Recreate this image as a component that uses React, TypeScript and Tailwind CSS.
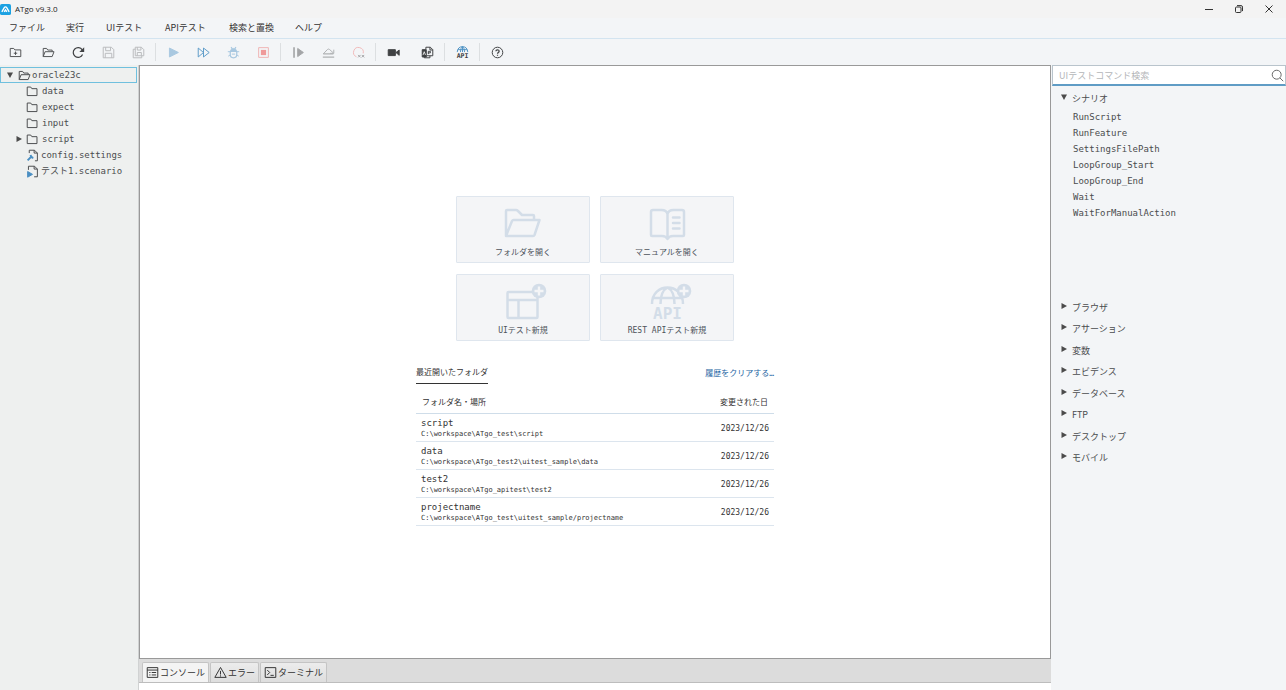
import { useState, type ReactNode } from "react";

const folderPath = "M1.5 13V2.5h4.3l1.4 2h6.3V13z";
const openFolderPath = "M1.5 13V3h4.2l1.4 2h5.4v2M1.5 13l2.3-6h11l-2.3 6z";

function Icon({ children, className = "" }: { children: ReactNode; className?: string }) {
    return (
        <svg
            viewBox="0 0 16 16"
            className={`size-[13px] shrink-0 overflow-visible ${className}`}
            fill="none"
            stroke="currentColor"
            strokeWidth="1.2"
            strokeLinejoin="round"
        >
            {children}
        </svg>
    );
}

function Triangle({ open = false, className = "" }: { open?: boolean; className?: string }) {
    return (
        <svg viewBox="0 0 6 6" className={`size-1.5 shrink-0 ${className}`} fill="#4b4b4b">
            <path d={open ? "M0 .5h6L3 6z" : "M.5 0v6L6 3z"} />
        </svg>
    );
}

type Tool = { label: string; color: string; icon: ReactNode };

const toolGroups: Tool[][] = [
    [
        {
            label: "新規フォルダ",
            color: "text-[#505254]",
            icon: <><path d="M1.5 13V3h4.3l1.4 1.8h7.3V13z" /><path d="M8 6.8v4.2M5.9 8.9h4.2" /></>,
        },
        { label: "フォルダを開く", color: "text-[#505254]", icon: <path d={openFolderPath} /> },
        {
            label: "更新",
            color: "text-[#404244]",
            icon: <><path d="M13 10.5A6 6 0 1 1 12.6 4.8" strokeWidth="1.5" /><path d="M15 1.5v6H9z" fill="currentColor" stroke="none" /></>,
        },
        {
            label: "保存",
            color: "text-[#b9bbbd]",
            icon: <path d="M1.5 1.5h10l3 3v10h-13zM4.5 1.5v4.3h6V1.5M4 14.5V9h8v5.5" />,
        },
        {
            label: "すべて保存",
            color: "text-[#b9bbbd]",
            icon: <path d="M4 1.5h7.5l3 3V12H4zM6.5 1.5V5h4.5V1.5M6.5 12V8h5v4M4 4H1.5v10.5H12V12" />,
        },
    ],
    [
        {
            label: "実行",
            color: "text-[#a9c8e0]",
            icon: <path d="M3 2.5v11L14 8z" fill="currentColor" />,
        },
        {
            label: "すべて実行",
            color: "text-[#5d9bc9]",
            icon: <path d="M1.5 2.5v11L8 8zM8 2.5v11L15 8z" />,
        },
        {
            label: "デバッグ",
            color: "text-[#a9c8e0]",
            icon: (
                <>
                    <path d="M4 6.5h8v4a4 4 0 0 1-8 0zM5 1.5l1.5 2M11 1.5l-1.5 2" strokeWidth="1.5" />
                    <path d="M4.500 6C5 2 11 2 11.500 6z" fill="currentColor" />
                    <path d="M1 7h3M12 7h3M1.500 12.500 4 11M14.500 12.500 12 11M6 10h4" />
                </>
            ),
        },
        {
            label: "停止",
            color: "text-[#efb4b4]",
            icon: <><path d="M2 2h12v12H2z" /><path d="M4.8 4.8h6.4v6.4H4.8z" fill="#ef9a9a" stroke="none" /></>,
        },
    ],
    [
        {
            label: "再開",
            color: "text-[#a3a5a7]",
            icon: <><path d="M2.500 1.500v13" strokeWidth="2" /><path d="M7 3v10l7-5z" fill="currentColor" /></>,
        },
        {
            label: "ステップオーバー",
            color: "text-[#b0b2b4]",
            icon: <><path d="M1 13.800h14M1.500 9.800h12.500" strokeWidth="1.500" /><path d="m1.500 9.800 5-5.300c1-1 2-1 3 0l4.500 4M14.500 4.500v4.500H10" /></>,
        },
        {
            label: "ブレークポイントを削除",
            color: "text-[#f1b9b9]",
            icon: <><path d="M5.5 13.3A6 6 0 1 1 13.8 9" /><path d="m7.5 11 3 3m0-3-3 3M12 11l3 3m0-3-3 3" stroke="#a3a5a7" /></>,
        },
    ],
    [
        {
            label: "録画",
            color: "text-[#3f4143]",
            icon: <path d="M1.5 4.5h8.8v7.3H1.500zM11 8l4-3v6.500z" fill="currentColor" />,
        },
        {
            label: "レポート",
            color: "text-[#3f4143]",
            icon: (
                <>
                    <path d="M1.5 4.5h5v9h-5z" fill="currentColor" />
                    <path d="M6 4V1.5h5.5l3 3V12H7M11 1.5v3.4h3.5M9 10V6.500h2.500v2H9M4 13.500v1h7V12" />
                    <path d="m2.5 11 1.5-4 1.5 4" stroke="#fff" strokeWidth="1" />
                </>
            ),
        },
    ],
    [
        {
            label: "API",
            color: "text-[#4f93c4]",
            icon: (
                <>
                    <path d="M1.500 7.500C1.500-1.500 14.500-1.500 14.500 7.500M2.500 4.500h11M5.500 7.500C5.500 4 6.500 1.500 8 .8c1.500.7 2.500 3.200 2.500 6.700M8 1v6.500" />
                    <text x="8" y="15" textAnchor="middle" fontSize="8" fontWeight="700" fill="#3f4143" stroke="none" fontFamily="DejaVu Sans Mono, monospace">API</text>
                </>
            ),
        },
    ],
    [
        {
            label: "ヘルプ",
            color: "text-[#404244]",
            icon: <><circle cx="8" cy="8" r="6.5" /><path d="M6 6.600c0-2.600 4-2.600 4-.1C10 8 8 8 8 9.500M8 10.700v1.400" strokeWidth="1.5" /></>,
        },
    ],
];

const menus = [
    { name: "ファイル", width: "w-[57px]" },
    { name: "実行", width: "w-10" },
    { name: "UIテスト", width: "w-[59px]" },
    { name: "APIテスト", width: "w-16" },
    { name: "検索と置換", width: "w-[66px]" },
    { name: "ヘルプ", width: "w-12" },
];

const folders = ["data", "expect", "input", "script"];

const commands = [
    "RunScript",
    "RunFeature",
    "SettingsFilePath",
    "LoopGroup_Start",
    "LoopGroup_End",
    "Wait",
    "WaitForManualAction",
];

const categories = ["ブラウザ", "アサーション", "変数", "エビデンス", "データベース", "FTP", "デスクトップ", "モバイル"];

const recent = [
    { name: "script", path: "C:\\workspace\\ATgo_test\\script", date: "2023/12/26" },
    { name: "data", path: "C:\\workspace\\ATgo_test2\\uitest_sample\\data", date: "2023/12/26" },
    { name: "test2", path: "C:\\workspace\\ATgo_apitest\\test2", date: "2023/12/26" },
    { name: "projectname", path: "C:\\workspace\\ATgo_test\\uitest_sample/projectname", date: "2023/12/26" },
];

const plusBadge = (cx: number) => (
    <>
        <circle cx={cx} cy="10" r="7.3" fill="currentColor" stroke="none" />
        <path d={`M${cx} 5.5v9M${cx - 4.5} 10h9`} stroke="#f4f5f7" strokeWidth="2.4" />
    </>
);

const cards = [
    {
        label: "フォルダを開く",
        icon: <path d="M5 33V8q0-1 1-1h9q1 0 2 1l4 4h11q1 0 1 1v4M5 33l6-15q.5-1 1.5-1h26L33.5 32q-.4 1-1.5 1z" />,
    },
    {
        label: "マニュアルを開く",
        icon: (
            <>
                <path d="M22.5 36V11q-1-4-6-4H8q-2 0-2 2v23q0 1 1 1h10q4 0 5.5 3 1.5-3 5.5-3h10q1 0 1-1V9q0-2-2-2h-8.5q-5 0-6 4" />
                <path d="M28 14.5h6.5M28 20h6.5M28 25.5h6.5" strokeLinecap="round" />
            </>
        ),
    },
    {
        label: "UIテスト新規",
        icon: (
            <>
                <rect x="6.5" y="11" width="30" height="26" rx="1" />
                <path d="M6.5 19h30M17.5 19v18" />
                {plusBadge(38)}
            </>
        ),
    },
    {
        label: "REST APIテスト新規",
        icon: (
            <>
                <path d="M7 23c0-22 31-22 31 0M8 17h29M15.5 23c0-8 2-14 7-16.5 5 2.5 7 8.5 7 16.5" />
                {plusBadge(39)}
                <text x="22.5" y="38" textAnchor="middle" fontSize="16" fontWeight="700" fill="currentColor" stroke="none" fontFamily="DejaVu Sans Mono, monospace">API</text>
            </>
        ),
    },
];

const bottomTabs = [
    { name: "コンソール", icon: <path d="M1.5 2h13v12h-13zM1.5 5h13M4 8h1.5M7 8h5.5M4 11h1.5M7 11h5.5" /> },
    { name: "エラー", icon: <path d="M8 1.8 15 14H1zM8 6v4.5M8 11.5V13" /> },
    { name: "ターミナル", icon: <path d="M1.5 2h13v12h-13zM4 5l3 3-3 3M8 11.5h4" /> },
];

function TitleBar() {
    return (
        <header className="flex h-[18px] shrink-0 items-center bg-[#f3f3f3]">
            <svg viewBox="0 0 12 12" className="size-[11px]">
                <rect width="12" height="12" rx="2" fill="#1ba1e2" />
                <path d="M2 8.5 4.5 4.2q1.5-2 3 0L10 8.5M4.5 8.5 6 6.500l1.500 2" fill="none" stroke="#fff" strokeWidth="1.5" />
            </svg>
            <h1 className="ml-1 grow font-['Open_Sans',sans-serif] text-[8px] text-[#222]">ATgo v9.3.0</h1>
            <div className="flex text-[#333]">
                <button aria-label="最小化" className="flex w-[30px] justify-center">
                    <svg viewBox="0 0 8 8" className="size-2" fill="none" stroke="currentColor"><path d="M0 4.5h8" /></svg>
                </button>
                <button aria-label="元に戻す" className="flex w-[30px] justify-center">
                    <svg viewBox="0 0 8 8" className="size-2" fill="none" stroke="currentColor">
                        <rect x=".5" y="2" width="5.5" height="5.5" rx="1" />
                        <path d="M2 .6h4q1.500 0 1.500 1.500v4" />
                    </svg>
                </button>
                <button aria-label="閉じる" className="mr-0.5 flex w-[30px] justify-center">
                    <svg viewBox="0 0 8 8" className="size-2" fill="none" stroke="currentColor"><path d="m.5.5 7 7m0-7-7 7" /></svg>
                </button>
            </div>
        </header>
    );
}

function ProjectTree() {
    return (
        <aside className="w-[139px] shrink-0 border-r border-[#d0d2d2] bg-[#eef0ef] pt-0.5">
            <ul>
                <li>
                    <div className="mr-px flex h-4 items-center border border-[#6fc0de] pl-1.5">
                        <Triangle open />
                        <Icon className="ml-[5px] size-3"><path d={openFolderPath} /></Icon>
                        <span className="ml-px">oracle23c</span>
                    </div>
                    <ul>
                        {folders.map((name) => (
                            <li key={name} className="flex h-4 items-center pl-4">
                                <Triangle className={name === "script" ? "" : "invisible"} />
                                <Icon className="ml-1 size-3"><path d={folderPath} /></Icon>
                                <span className="ml-[3px]">{name}</span>
                            </li>
                        ))}
                        <li className="flex h-4 items-center pl-[26px]">
                            <Icon>
                                <path d="M4 5V1.5h6.5L14 5v9.5h-3M10 1.5V5h4" />
                                <path d="m2 14 5-5M5.500 7.500c.5 2 1.500 3 3.500 3.500" stroke="#4a8fc2" strokeWidth="2.4" />
                            </Icon>
                            <span className="ml-0.5">config.settings</span>
                        </li>
                        <li className="flex h-4 items-center pl-[26px]">
                            <Icon>
                                <path d="M3 6V1.5h7.5L14 5v9.5h-4M10 1.5V5h4" />
                                <path d="M2 8v7l6-3.5z" fill="#4a8fc2" stroke="#4a8fc2" />
                            </Icon>
                            <span className="ml-0.5">テスト1.scenario</span>
                        </li>
                    </ul>
                </li>
            </ul>
        </aside>
    );
}

function StartPage() {
    return (
        <main className="flex min-h-0 grow flex-col items-center justify-center border border-[#999] bg-white pb-0.5">
            <div className="grid grid-cols-2 gap-x-2.5 gap-y-[11px]">
                {cards.map((card) => (
                    <button
                        key={card.label}
                        className="flex h-[67px] w-[134px] flex-col items-center rounded-[1px] border border-[#dfe6ee] bg-[#f4f5f7] pt-1.5"
                    >
                        <svg viewBox="0 0 44 40" className="h-10 w-11 overflow-visible text-[#d3dde8]" fill="none" stroke="currentColor" strokeWidth="2.5" strokeLinejoin="round">
                            {card.icon}
                        </svg>
                        <span className="mt-1 text-[8px] leading-3 text-[#4d535b]">{card.label}</span>
                    </button>
                ))}
            </div>

            <section className="mt-6 w-[358px] text-[8px] text-[#333]">
                <div className="flex items-center justify-between">
                    <h2 className="border-b border-[#333] pb-0.5 leading-4">最近開いたフォルダ</h2>
                    <a href="#clear" className="text-[#2565a3]">履歴をクリアする…</a>
                </div>
                <table className="mt-2 w-full border-collapse">
                    <thead>
                        <tr className="h-[22px] border-b border-[#cfdde9]">
                            <th className="pl-1.5 text-left font-normal">フォルダ名・場所</th>
                            <th className="pr-1.5 text-right font-normal">変更された日</th>
                        </tr>
                    </thead>
                    <tbody>
                        {recent.map((item) => (
                            <tr key={item.name} className="h-7 border-b border-[#dce5ee]">
                                <td className="py-0 pl-[5px]">
                                    <div className="text-[9px] leading-3">{item.name}</div>
                                    <div className="text-[7px] leading-[10px]">{item.path}</div>
                                </td>
                                <td className="pt-0.5 pr-[5px] pb-0 text-right">{item.date}</td>
                            </tr>
                        ))}
                    </tbody>
                </table>
            </section>
        </main>
    );
}

function CommandPanel() {
    const [query, setQuery] = useState<string>("");

    return (
        <aside className="ml-px w-[234px] shrink-0 bg-[#f3f5f7]">
            <div className="flex h-[21px] items-center border border-b-2 border-[#b9c4cc] border-b-[#5f9cc5] bg-white">
                <input
                    type="text"
                    aria-label="UIテストコマンド検索"
                    placeholder="UIテストコマンド検索"
                    className="min-w-0 grow pt-0.5 pl-1.5 font-['Noto_Sans_CJK_JP',sans-serif] leading-4 placeholder-[#b4b6b8] focus:outline-none"
                    value={query}
                    onChange={(e) => setQuery(e.target.value)}
                />
                <button aria-label="検索" className="pr-px text-[#666]">
                    <Icon><circle cx="7" cy="7" r="5.5" /><path d="m11 11 4 4" /></Icon>
                </button>
            </div>
            <div className="mt-[3px] flex h-5 items-center pl-[9px]">
                <Triangle open className="mb-1" />
                <span className="ml-[5px]">シナリオ</span>
            </div>
            <ul className="min-h-[188px] pl-[21px] leading-4">
                {commands.map((name) => (
                    <li key={name}>{name}</li>
                ))}
            </ul>
            <ul className="grid h-[172px] auto-rows-fr">
                {categories.map((name) => (
                    <li key={name} className="flex items-center pl-[9px]">
                        <Triangle className="mb-1" />
                        <span className="ml-[5px] font-['Noto_Sans_CJK_JP',sans-serif]">{name}</span>
                    </li>
                ))}
            </ul>
        </aside>
    );
}

export default function App() {
    return (
        <div className="flex h-screen flex-col overflow-hidden bg-[#f3f5f7] font-['DejaVu_Sans_Mono','Noto_Sans_CJK_JP',monospace] text-[9px] leading-4 text-[#4a4c4e]">
            <TitleBar />

            <nav className="flex h-[21px] shrink-0 items-center border-b border-[#d3e4f0] pl-[9px] font-['Noto_Sans_CJK_JP',sans-serif] text-[#333]">
                {menus.map((menu) => (
                    <button key={menu.name} className={`${menu.width} text-left`}>{menu.name}</button>
                ))}
            </nav>

            {/* toolbar */}
            <div className="flex h-[26px] shrink-0 items-center">
                {toolGroups.map((group, i) => (
                    <div key={i} className="flex items-center">
                        {i > 0 && <span className="mx-0.5 h-[18px] w-px bg-[#dcdfe1]" />}
                        <div className={i === 3 ? "flex gap-1" : "flex"}>
                            {group.map((tool, j) => (
                                <button
                                    key={tool.label}
                                    aria-label={tool.label}
                                    className={`flex w-[30px] justify-center ${tool.color} ${i === 0 && j === 0 ? "mr-[3px]" : ""}`}
                                >
                                    <Icon>{tool.icon}</Icon>
                                </button>
                            ))}
                        </div>
                    </div>
                ))}
            </div>

            <div className="flex min-h-0 grow">
                <ProjectTree />
                <div className="flex min-w-0 grow flex-col">
                    <StartPage />
                    <div className="flex h-6 shrink-0 items-end gap-px border-b border-[#bdbdbd] bg-[#dcdcdc] pl-[3px]">
                        {bottomTabs.map((tab, i) => (
                            <button
                                key={tab.name}
                                className={`flex h-5 items-center gap-px rounded-t-xs border border-b-0 border-[#c4c4c4] px-[3px] font-['Noto_Sans_CJK_JP',sans-serif] text-[#333] ${i === 0 ? "bg-[#f4f4f4]" : "bg-linear-to-b from-[#ececec] to-[#dedede]"}`}
                            >
                                <Icon className="size-3">{tab.icon}</Icon>
                                {tab.name}
                            </button>
                        ))}
                    </div>
                    <div className="h-[7px] shrink-0 bg-white" />
                </div>
                <CommandPanel />
            </div>
        </div>
    );
}
